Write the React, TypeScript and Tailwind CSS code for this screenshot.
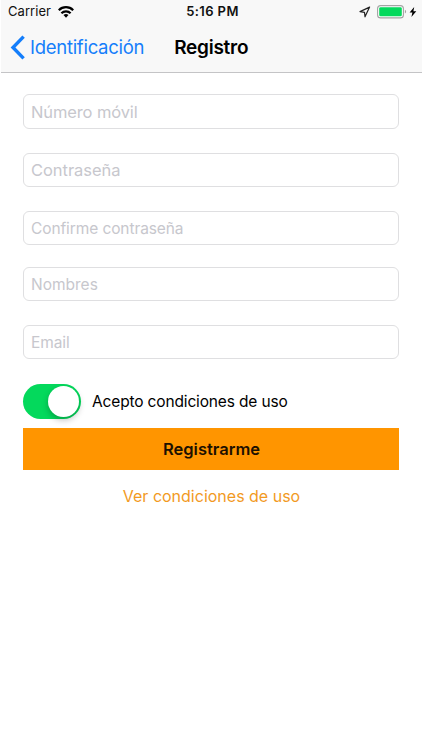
import { useState } from "react";

const fields = [
  { name: "phone", type: "tel", placeholder: "Número móvil", style: "mt-[21.3px] pt-[1.5px] text-[16.5px] tracking-[-0.12px]" },
  { name: "password", type: "password", placeholder: "Contraseña", style: "mt-6 pt-[1.5px] text-[16.5px] tracking-[-0.05px]" },
  { name: "confirm", type: "password", placeholder: "Confirme contraseña", style: "mt-6 pt-px text-[15.5px] tracking-[-0.1px]" },
  { name: "names", type: "text", placeholder: "Nombres", style: "mt-[21.7px] text-[15.5px]" },
  { name: "email", type: "email", placeholder: "Email", style: "mt-6 text-[15.5px] tracking-[-0.1px]" },
];

function StatusBar() {
  return (
    <div className="flex h-6 items-center justify-between pl-[7px] pr-[5px] text-[13px] text-[#111]">
      <div className="flex flex-1 items-center gap-[7px]">
        <span className="tracking-[0.05px]">Carrier</span>
        <svg width="16" height="12" viewBox="0 0 16 12">
          <g fill="none" stroke="#000" strokeWidth="2.2">
            <path d="M.8 4.2a10.2 10.2 0 0 1 14.4 0" />
            <path d="M3.4 7.2a6.5 6.5 0 0 1 9.2 0" />
          </g>
          <path d="M5.5 9.1a3.6 3.6 0 0 1 5 0L8 11.7Z" fill="#000" />
        </svg>
      </div>
      <span className="font-semibold tracking-[0.4px]">5:16 PM</span>
      <div className="flex flex-1 items-center justify-end">
        <svg width="12" height="12" viewBox="0 0 12 12" fill="none" stroke="#222" strokeWidth="1.2">
          <path d="M10.6 1.1 1 5.6l4.5.7.5 4.5Z" strokeLinejoin="round" />
        </svg>
        <svg className="ml-[6px]" width="30" height="14" viewBox="0 0 30 14">
          <rect x=".6" y=".6" width="25.8" height="12.3" rx="3" fill="#fff" stroke="#a3a3a3" strokeWidth="1.1" />
          <rect x="2.2" y="2.2" width="22.6" height="9.1" rx="1.4" fill="#04d95c" />
          <path d="M27.9 4.8c1.6.6 1.6 3.2 0 3.8Z" fill="#a3a3a3" />
        </svg>
        <svg className="ml-[2px]" width="8" height="12" viewBox="0 0 8 12" fill="#000">
          <path d="M5.2 1 .6 6.6h2.8L2.4 11l4.9-5.8H4.4Z" />
        </svg>
      </div>
    </div>
  );
}

export default function App() {
  const [accepted, setAccepted] = useState(true);

  return (
    <div className="h-[750px] w-[422px] bg-white font-['Inter','Liberation_Sans',sans-serif] text-black">
      <header className="ml-px h-[73px] border-b border-[#c4c4c6] bg-[#f8f8f8]">
        <StatusBar />
        <div className="flex h-[47px] items-center">
          <button className="flex items-center pl-[9px] text-[#147efb]">
            <svg width="16" height="25" viewBox="0 0 16 25" fill="none" stroke="currentColor" strokeWidth="3.4">
              <path d="M13.6 1.6 3 12.5l10.6 10.9" />
            </svg>
            <span className="ml-[4px] text-[18.5px] tracking-[-0.28px]">Identificación</span>
          </button>
          <h1 className="ml-[30px] pt-[2px] text-[19px] font-semibold tracking-[-0.25px]">Registro</h1>
        </div>
      </header>

      <form className="flex flex-col pl-[23px] pr-[23px]">
        {fields.map((field) => (
          <input
            key={field.name}
            name={field.name}
            type={field.type}
            placeholder={field.placeholder}
            className={`h-[34.3px] w-full rounded-[6px] border border-[#dfdfe1] bg-white px-[7px] outline-none placeholder:text-[#c7c7cd] ${field.style}`}
          />
        ))}

        <div className="mt-[24.5px] flex h-[35px] items-center">
          <button
            type="button"
            role="switch"
            aria-checked={accepted}
            onClick={() => setAccepted(!accepted)}
            className={`flex h-[35px] w-[58px] items-center rounded-full px-[2px] ${
              accepted ? "justify-end bg-[#04d95c]" : "justify-start bg-[#e5e5ea]"
            }`}>
            <span className="size-[31px] rounded-full bg-white shadow-[0_3px_6px_rgba(0,0,0,0.25)]" />
          </button>
          <span className="ml-[11px] text-[15.5px] tracking-[-0.15px]">Acepto condiciones de uso</span>
        </div>

        <button
          type="submit"
          className="mt-[9px] h-[42px] bg-[#ff9500] pt-px pl-px text-[16.5px] font-semibold text-[#1c1000]">
          Registrarme
        </button>
        <a className="mt-[14px] pl-px text-center text-base leading-6 text-[#f29a1f]">Ver condiciones de uso</a>
      </form>
    </div>
  );
}
